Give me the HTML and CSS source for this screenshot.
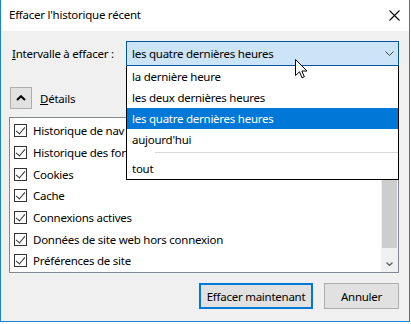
FILE: index.html
```html
<!DOCTYPE html>
<html lang="fr">
<head>
    <meta charset="UTF-8">
    <title>Effacer l'historique récent</title>
    <link rel="stylesheet" href="styles.css">
</head>
<body>
    <div class="window">
        <div class="titlebar">
            <span class="title">Effacer l'historique récent</span>
            <svg class="close" width="11" height="11" viewBox="0 0 11 11">
                <path d="M0.5 0.5 L10.5 10.5 M10.5 0.5 L0.5 10.5" stroke="#000" stroke-width="1.1"/>
            </svg>
        </div>

        <div class="content">
            <div class="interval-row">
                <label class="interval-label"><u>I</u>ntervalle à effacer :</label>
                <div class="select-wrap">
                    <div class="select">
                        <span>les quatre dernières heures</span>
                        <svg class="chevron" width="9" height="5" viewBox="0 0 9 5">
                            <path d="M0.5 0.5 L4.5 4.5 L8.5 0.5" fill="none" stroke="#444" stroke-width="1"/>
                        </svg>
                    </div>
                    <div class="dropdown">
                        <div class="option">la dernière heure</div>
                        <div class="option">les deux dernières heures</div>
                        <div class="option selected">les quatre dernières heures</div>
                        <div class="option">aujourd'hui</div>
                        <div class="separator"></div>
                        <div class="option">tout</div>
                    </div>
                    <svg class="cursor" width="13" height="21" viewBox="0 0 13 21">
                        <path d="M0.5 0.5 L0.5 16.5 L4.5 12.8 L7 18.8 L9.3 17.8 L6.9 12 L12 12 Z" fill="#fff" stroke="#000" stroke-width="1" stroke-linejoin="round"/>
                    </svg>
                </div>
            </div>

            <div class="details-row">
                <div class="details-btn">
                    <svg width="10" height="6" viewBox="0 0 10 6">
                        <path d="M1 5 L5 1.2 L9 5" fill="none" stroke="#000" stroke-width="2"/>
                    </svg>
                </div>
                <span class="details-label"><u>D</u>étails</span>
            </div>

            <div class="listbox">
                <div class="items">
                    <div class="item"><span class="check"></span>Historique de nav</div>
                    <div class="item"><span class="check"></span>Historique des for</div>
                    <div class="item"><span class="check"></span>Cookies</div>
                    <div class="item"><span class="check"></span>Cache</div>
                    <div class="item"><span class="check"></span>Connexions actives</div>
                    <div class="item"><span class="check"></span>Données de site web hors connexion</div>
                    <div class="item"><span class="check"></span>Préférences de site</div>
                </div>
                <div class="scrollbar">
                    <div class="arrow"></div>
                    <div class="thumb"></div>
                    <div class="track"></div>
                    <div class="arrow">
                        <svg width="7" height="4" viewBox="0 0 7 4">
                            <path d="M0.5 0.5 L3.5 3.5 L6.5 0.5" fill="none" stroke="#606060" stroke-width="1.3"/>
                        </svg>
                    </div>
                </div>
            </div>

            <div class="buttons">
                <div class="btn default">Effacer maintenant</div>
                <div class="btn">Annuler</div>
            </div>
        </div>
    </div>
</body>
</html>
```

FILE: styles.css
```css
* {
    margin: 0;
    padding: 0;
    box-sizing: border-box;
}

body {
    font-family: "Noto Sans", "Open Sans", sans-serif;
    font-size: 11.5px;
    letter-spacing: -0.25px;
    color: #000;
    background: #fff;
}

.window {
    width: 410px;
    height: 322px;
    border: 1px solid #1883d7;
    border-top: none;
    background: #f0f0f0;
    display: flex;
    flex-direction: column;
}

.titlebar {
    height: 31px;
    background: #fff;
    display: flex;
    align-items: center;
    justify-content: space-between;
    padding: 0 9px 2px 8px;
}

.close {
    margin-top: 2px;
}

.content {
    flex: 1;
    padding: 10px 10px 12px 8px;
    display: flex;
    flex-direction: column;
}

.interval-row {
    display: flex;
    align-items: center;
    height: 25px;
}

.interval-label {
    width: 117px;
    padding-left: 3px;
}

.select-wrap {
    position: relative;
    width: 273px;
}

.select {
    height: 25px;
    background: #cce4f7;
    border: 1px solid #005499;
    display: flex;
    align-items: center;
    justify-content: space-between;
    padding: 0 4px 0 5px;
}

.dropdown {
    position: absolute;
    top: 25px;
    left: 0;
    width: 273px;
    background: #fff;
    border: 1px solid #000;
    border-top: none;
    z-index: 2;
}

.option {
    height: 21px;
    line-height: 21px;
    padding-left: 5px;
}

.option.selected {
    background: #0078d7;
    color: #fff;
}

.separator {
    height: 3px;
    margin-left: 28px;
    margin-bottom: 5px;
    border-bottom: 1px solid #d7d7d7;
}

.cursor {
    position: absolute;
    left: 169px;
    top: 18px;
    z-index: 3;
}

.details-row {
    display: flex;
    align-items: center;
    margin-top: 21px;
    height: 22px;
}

.details-btn {
    width: 22px;
    height: 22px;
    margin-left: 1px;
    background: #e1e1e1;
    border: 1px solid #adadad;
    display: flex;
    align-items: center;
    justify-content: center;
}

.details-label {
    margin-left: 8px;
}

.listbox {
    margin-top: 8px;
    height: 156px;
    background: #fff;
    border: 1px solid #828790;
    display: flex;
    overflow: hidden;
}

.items {
    flex: 1;
    padding-top: 2px;
    white-space: nowrap;
    overflow: hidden;
}

.item {
    height: 21.7px;
    display: flex;
    align-items: center;
    padding-left: 4px;
}

.check {
    width: 13px;
    height: 13px;
    border: 1px solid #333;
    margin-right: 6px;
    position: relative;
}

.check::after {
    content: "";
    position: absolute;
    left: 3px;
    top: 0px;
    width: 4px;
    height: 8px;
    border-right: 1px solid #333;
    border-bottom: 1px solid #333;
    transform: rotate(40deg);
}

.scrollbar {
    width: 17px;
    background: #f0f0f0;
    display: flex;
    flex-direction: column;
}

.arrow {
    height: 17px;
    display: flex;
    align-items: center;
    justify-content: center;
}

.thumb {
    height: 113px;
    margin: 0 1px;
    background: #cdcdcd;
}

.track {
    flex: 1;
}

.buttons {
    margin-top: 10px;
    display: flex;
    justify-content: flex-end;
    gap: 11px;
}

.btn {
    height: 26px;
    background: #e1e1e1;
    border: 1px solid #adadad;
    display: flex;
    align-items: center;
    justify-content: center;
    width: 75px;
}

.btn.default {
    width: 114px;
    border: 2px solid #0078d7;
}
```
